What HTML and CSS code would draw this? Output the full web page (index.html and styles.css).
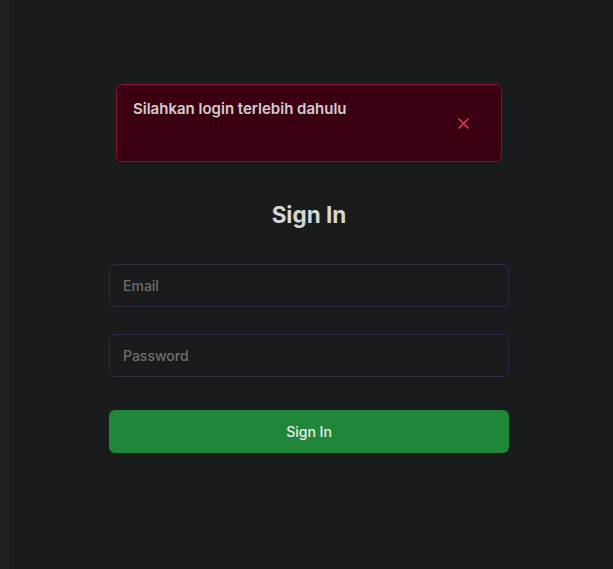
FILE: index.html
```html
<!DOCTYPE html>
<html lang="id">
<head>
<meta charset="utf-8">
<title>Sign In</title>
<link rel="stylesheet" href="styles.css">
</head>
<body>
<div class="layout">
  <aside class="sidebar"></aside>
  <main class="main">
    <div class="panel">
      <div class="alert">
        <span class="alert-text">Silahkan login terlebih dahulu</span>
        <button class="alert-close" aria-label="Close">
          <svg width="11" height="11" viewBox="0 0 11 11"><path d="M1 1L10 10M10 1L1 10" stroke="#e8315c" stroke-width="1.7" stroke-linecap="round"/></svg>
        </button>
      </div>
      <h1 class="title">Sign In</h1>
      <form class="form">
        <input class="field" type="email" placeholder="Email">
        <input class="field" type="password" placeholder="Password">
        <button class="submit" type="button">Sign In</button>
      </form>
    </div>
  </main>
</div>
</body>
</html>
```
FILE: styles.css
```css
* { box-sizing: border-box; }
html, body { margin: 0; height: 100%; }
body {
  background: #1a1b1d;
  font-family: Inter, "Noto Sans", sans-serif;
}
.layout { display: flex; min-height: 100vh; }
.sidebar { width: 9px; background: #1f2123; flex: none; }
.main { flex: 1; }
.panel {
  width: 400px;
  margin-left: 100px;
  padding-top: 84px;
  display: flex;
  flex-direction: column;
}
.alert {
  margin: 0 7px;
  height: 78px;
  background: #3a0012;
  border: 1px solid #8a0f33;
  border-radius: 6px;
  padding: 13px 16px;
  display: flex;
  justify-content: space-between;
  position: relative;
}
.alert-text {
  color: #d2cdd0;
  font-size: 15px;
  font-weight: 600;
  line-height: 22px;
}
.alert-close {
  background: none;
  border: 0;
  padding: 0;
  position: absolute;
  right: 28px;
  top: 31px;
  width: 20px;
  height: 14px;
  display: flex;
  align-items: center;
  justify-content: center;
}
.title {
  margin: 39px 0 0;
  text-align: center;
  color: #d6d6d6;
  font-size: 22.5px;
  font-weight: 700;
  line-height: 28px;
}
.form {
  margin-top: 35px;
  display: flex;
  flex-direction: column;
}
.field {
  height: 43px;
  background: #1a1b1d;
  border: 1px solid #2b2c48;
  border-radius: 6px;
  padding: 0 13px;
  font-family: inherit;
  font-size: 14px;
  font-weight: 500;
  color: #ddd;
  margin-bottom: 27px;
}
.field::placeholder { color: #6e6e6e; }
.field:last-of-type { margin-bottom: 33px; }
.submit {
  height: 43px;
  background: #20873a;
  border: 0;
  border-radius: 6px;
  color: #ececec;
  font-family: inherit;
  font-size: 14px;
  font-weight: 500;
}
```
